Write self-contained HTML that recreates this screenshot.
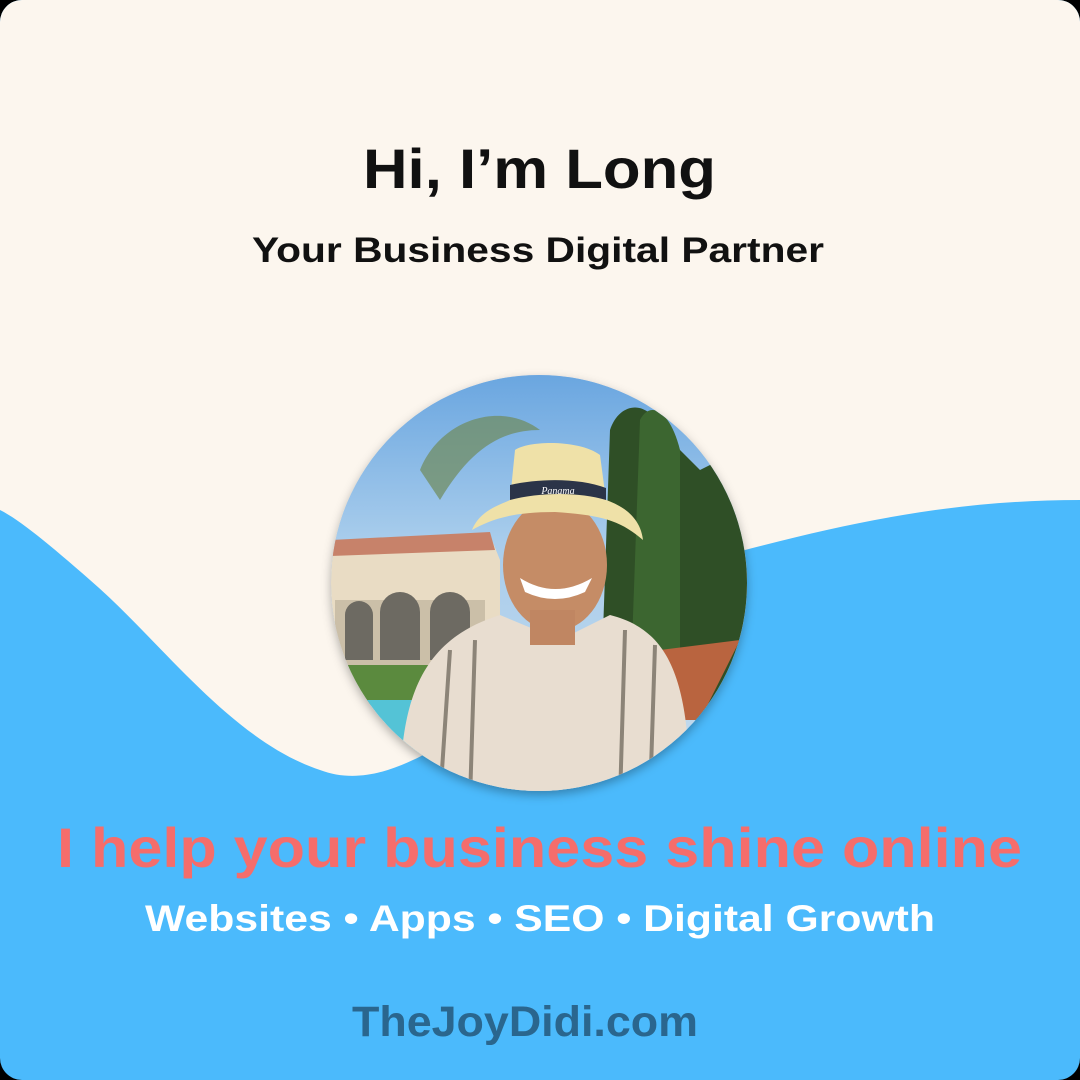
<!DOCTYPE html>
<html><head><meta charset="utf-8"><style>
html,body{margin:0;padding:0;background:#000;width:1080px;height:1080px;overflow:hidden}
</style></head><body>
<svg width="1080" height="1080" viewBox="0 0 1080 1080" xmlns="http://www.w3.org/2000/svg" style="display:block">
<defs>
<clipPath id="r"><rect x="0" y="0" width="1080" height="1080" rx="22"/></clipPath>
<clipPath id="c"><circle cx="539" cy="583" r="208"/></clipPath>
<linearGradient id="sky" x1="0" y1="0" x2="0" y2="1">
<stop offset="0" stop-color="#6aa6e0"/><stop offset="0.4" stop-color="#a9cdec"/><stop offset="1" stop-color="#c8dcec"/></linearGradient>
<filter id="sh" x="-20%" y="-20%" width="140%" height="140%"><feDropShadow dx="0" dy="4" stdDeviation="5" flood-color="#000" flood-opacity="0.3"/></filter>
</defs>
<g clip-path="url(#r)">
<rect width="1080" height="1080" fill="#4bbafc"/>
<path d="M0 0 H1080 V500 C960 500 860 520 745 550 L690 600 C600 680 520 700 450 740 C400 770 360 785 320 770 C230 740 160 640 90 580 C50 545 20 520 0 510 Z" fill="#fcf6ee"/>
<g filter="url(#sh)"><circle cx="539" cy="583" r="208" fill="#bcd"/></g>
<g clip-path="url(#c)">
<rect x="330" y="375" width="420" height="420" fill="url(#sky)"/>
<path d="M330 545 L490 535 L500 560 V700 H330Z" fill="#e9dcc4"/>
<path d="M330 540 L490 532 L495 550 L330 556Z" fill="#c7826a"/>
<rect x="335" y="600" width="150" height="70" fill="#cbbfa8"/>
<path d="M345 660 V615 a14 14 0 0 1 28 0 V660Z M380 660 V612 a20 20 0 0 1 40 0 V660Z M430 660 V612 a20 20 0 0 1 40 0 V660Z" fill="#6d6a62"/>
<rect x="330" y="665" width="170" height="40" fill="#5b8a3e"/>
<rect x="330" y="700" width="120" height="60" fill="#54c3d6"/>
<path d="M610 430 C620 400 650 400 660 430 L700 470 L720 460 L750 500 V720 H600 Z" fill="#2f4f26"/>
<path d="M640 420 C650 400 670 410 680 450 V700 H630Z" fill="#3c6630"/>
<path d="M420 470 C440 420 500 400 540 430 C500 430 470 450 440 500Z" fill="#6f8a5a" opacity="0.7"/>
<path d="M660 650 L740 640 L700 720 L660 720Z" fill="#b9643f"/>
<path d="M400 800 C400 700 420 640 500 615 L560 640 L610 615 C670 630 690 680 690 800Z" fill="#e8ddd0"/>
<path d="M440 800 L450 650 M470 800 L475 640 M620 800 L625 630 M650 800 L655 645" stroke="#8c8478" stroke-width="4"/>
<ellipse cx="555" cy="565" rx="52" ry="66" fill="#c58c66"/>
<rect x="530" y="610" width="45" height="35" fill="#c08662"/>
<path d="M520 578 Q555 600 592 578 L585 592 Q555 606 525 592Z" fill="#fff"/>
<path d="M472 530 C480 510 500 505 510 500 L515 450 C530 440 580 440 600 455 L606 500 C620 505 640 515 643 540 C620 520 600 515 555 512 C510 512 490 520 472 530Z" fill="#efe1a8"/>
<path d="M510 485 C540 478 580 478 606 488 L606 500 C580 492 540 492 510 500Z" fill="#2b3448"/>
<text x="558" y="494" font-family="Liberation Serif,serif" font-style="italic" font-size="10" fill="#fff" text-anchor="middle">Panama</text>
</g>
<g font-family="'Liberation Sans',sans-serif" font-weight="bold" text-anchor="middle">
<text x="539.5" y="188" font-size="56" fill="#111" textLength="353" lengthAdjust="spacingAndGlyphs">Hi, I’m Long</text>
<text x="538" y="262" font-size="35" fill="#111" textLength="572" lengthAdjust="spacingAndGlyphs">Your Business Digital Partner</text>
<text x="539.5" y="867" font-size="56" fill="#f56d6b" textLength="965" lengthAdjust="spacingAndGlyphs">I help your business shine online</text>
<text x="540" y="931" font-size="37" fill="#fff" textLength="790" lengthAdjust="spacingAndGlyphs">Websites • Apps • SEO • Digital Growth</text>
<text x="525" y="1036" font-size="43" fill="#2a668e" textLength="346" lengthAdjust="spacingAndGlyphs">TheJoyDidi.com</text>
</g>
</g>
</svg>
</body></html>
